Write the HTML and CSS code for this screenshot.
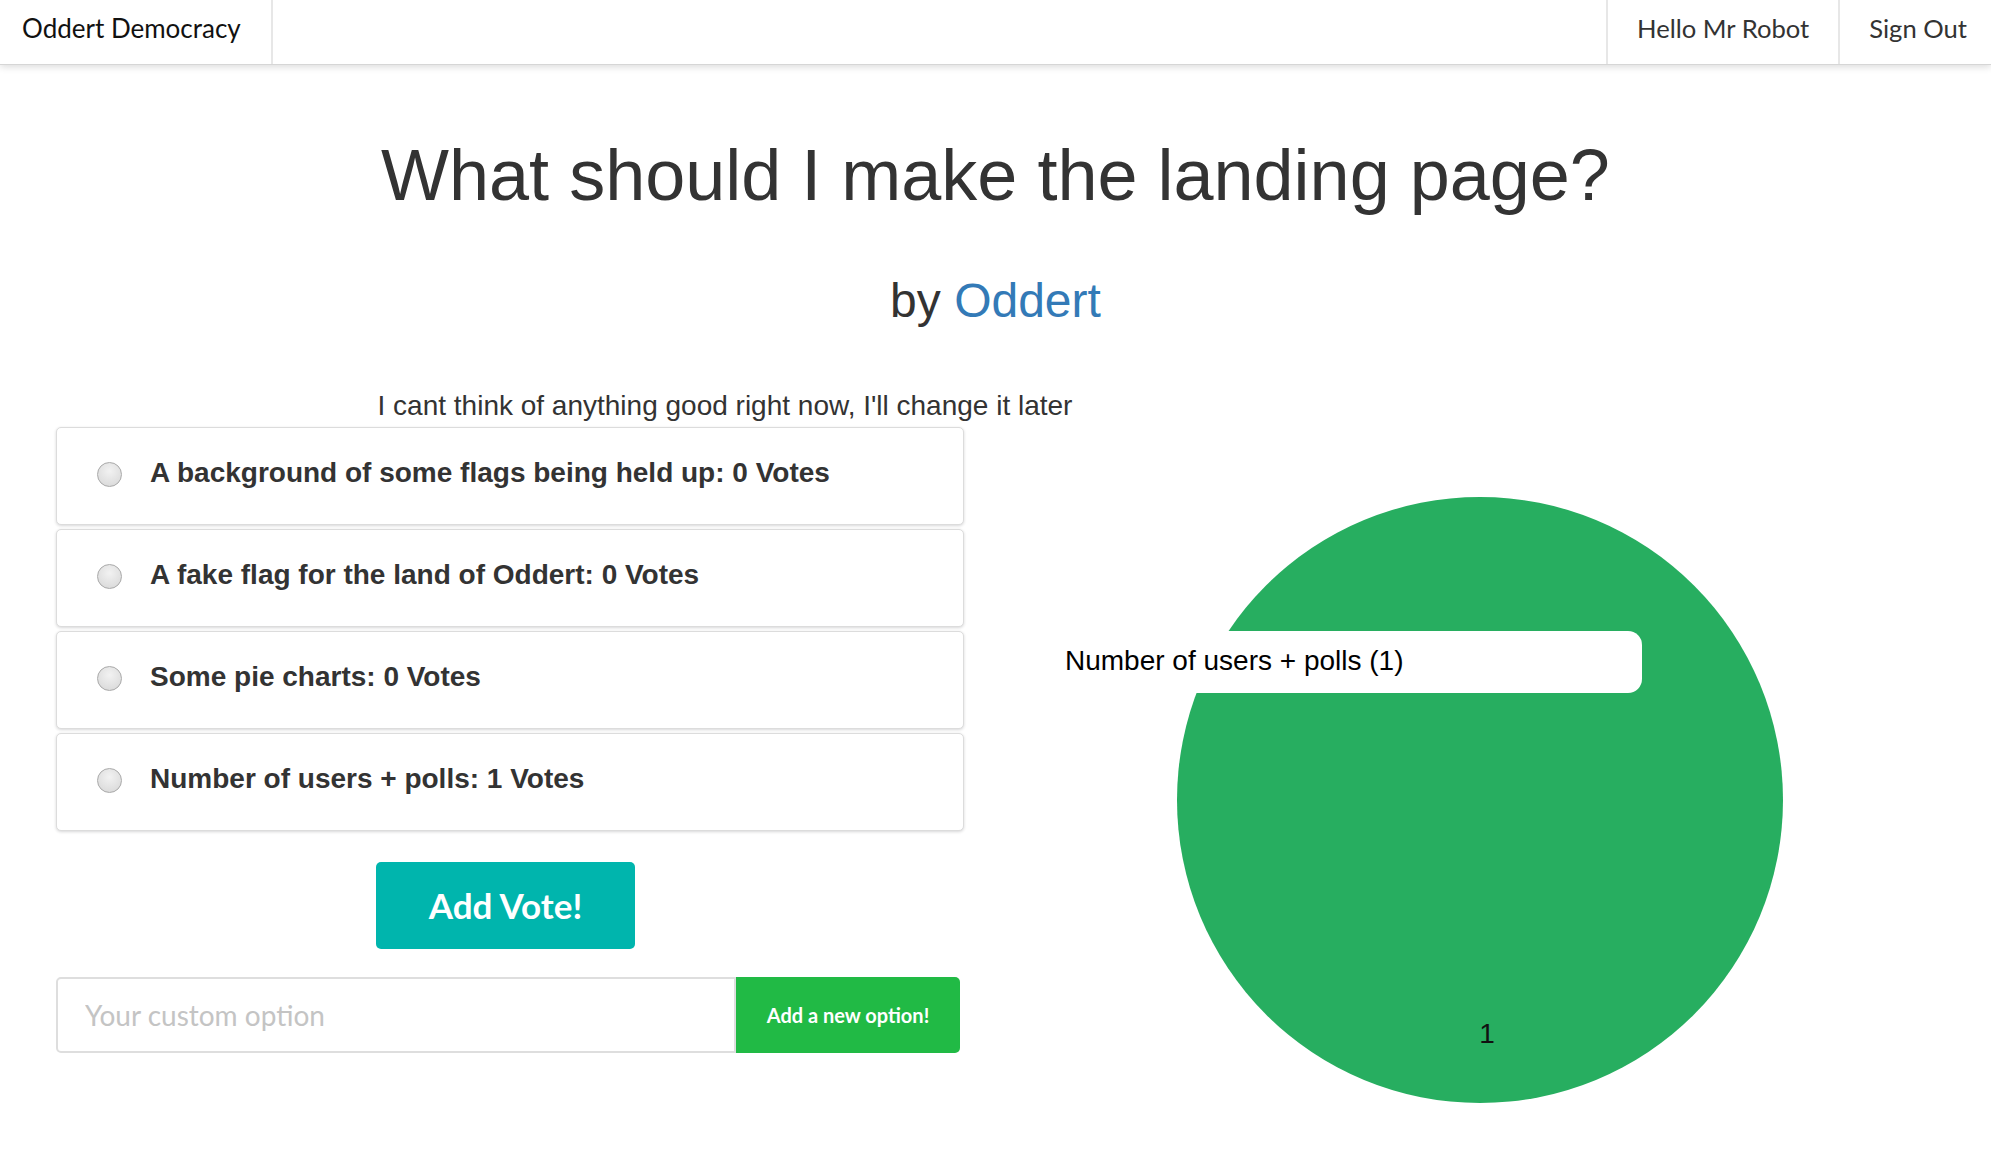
FILE: index.html
```html
<!DOCTYPE html>
<html lang="en">
<head>
<meta charset="utf-8">
<title>Oddert Democracy</title>
<link rel="stylesheet" href="styles.css">
</head>
<body>
<nav class="navbar">
  <a class="brand" href="#">Oddert Democracy</a>
  <div class="nav-right">
    <span class="nav-item">Hello Mr Robot</span>
    <a class="nav-item" href="#">Sign Out</a>
  </div>
</nav>
<main class="page">
  <h1 class="poll-title">What should I make the landing page?</h1>
  <h2 class="poll-author">by <a href="#">Oddert</a></h2>
  <p class="poll-desc">I cant think of anything good right now, I'll change it later</p>
  <div class="poll-body">
    <div class="poll-left">
      <label class="option-card"><input class="radio" type="radio" name="opt"><span class="option-text">A background of some flags being held up: 0 Votes</span></label>
      <label class="option-card"><input class="radio" type="radio" name="opt"><span class="option-text">A fake flag for the land of Oddert: 0 Votes</span></label>
      <label class="option-card"><input class="radio" type="radio" name="opt"><span class="option-text">Some pie charts: 0 Votes</span></label>
      <label class="option-card"><input class="radio" type="radio" name="opt"><span class="option-text">Number of users + polls: 1 Votes</span></label>
      <button class="vote-btn" type="button">Add Vote!</button>
      <div class="custom-row">
        <input class="custom-input" type="text" placeholder="Your custom option">
        <button class="add-btn" type="button">Add a new option!</button>
      </div>
    </div>
    <div class="poll-chart">
      <svg class="pie" width="606" height="606" viewBox="0 0 606 606">
        <circle cx="303" cy="303" r="303" fill="#27ae60"/>
        <text class="pie-label" x="310" y="546" text-anchor="middle">1</text>
      </svg>
      <div class="tooltip">Number of users + polls (1)</div>
    </div>
  </div>
</main>
</body>
</html>
```
FILE: styles.css
```css
body {
  margin: 0;
  font-family: "Liberation Sans", Arial, sans-serif;
  color: #333;
  background: #fff;
}

.navbar {
  display: flex;
  justify-content: space-between;
  height: 64px;
  border-bottom: 1px solid #d6d6d6;
  box-shadow: 0 2px 7px rgba(0, 0, 0, 0.14);
  font-family: Lato, "Open Sans", sans-serif;
  font-size: 26px;
}

.brand {
  display: flex;
  align-items: center;
  padding: 0 30px 8px 22px;
  border-right: 2px solid #e7e7e7;
  color: #111;
  text-decoration: none;
}

.nav-right {
  display: flex;
}

.nav-item {
  display: flex;
  align-items: center;
  padding: 0 29px 8px;
  border-left: 2px solid #e7e7e7;
  color: #333;
  font-size: 25.6px;
  text-decoration: none;
}

.nav-item:last-child {
  padding-right: 24px;
}

.poll-title {
  margin: 71px 0 0;
  font-size: 72px;
  font-weight: 400;
  line-height: 1.1;
  text-align: center;
}

.poll-author {
  margin: 60px 0 0;
  font-size: 48px;
  font-weight: 400;
  line-height: 1.1;
  text-align: center;
}

.poll-author a {
  color: #337ab7;
  text-decoration: none;
}

.poll-desc {
  margin: 63px 0 0;
  width: 1450px;
  font-size: 28px;
  line-height: 1.1;
  text-align: center;
}

.poll-body {
  display: flex;
  margin-top: 5px;
}

.poll-left {
  margin-left: 56px;
  width: 908px;
}

.option-card {
  display: flex;
  align-items: center;
  box-sizing: border-box;
  height: 98px;
  margin-bottom: 4px;
  padding: 0 0 5px 40px;
  border: 1px solid #dcdcdc;
  border-radius: 5px;
  box-shadow: 0 1px 3px rgba(34, 36, 38, 0.18);
  background: #fff;
}

.radio {
  appearance: none;
  -webkit-appearance: none;
  width: 25px;
  height: 25px;
  margin: 3px 28px 0 0;
  border: 1px solid #a9a9a9;
  border-radius: 50%;
  background: radial-gradient(circle at 50% 35%, #f2f2f2 0%, #dedede 70%, #d2d2d2 100%);
  flex-shrink: 0;
}

.option-text {
  font-size: 28px;
  font-weight: bold;
  color: #333;
}

.vote-btn {
  display: block;
  width: 259px;
  height: 87px;
  margin: 31px 0 0 320px;
  border: none;
  border-radius: 5px;
  background: #00b5ad;
  color: #fff;
  font-family: Lato, "Open Sans", sans-serif;
  font-weight: bold;
  font-size: 35px;
}

.custom-row {
  display: flex;
  height: 76px;
  margin-top: 28px;
  width: 904px;
}

.custom-input {
  box-sizing: border-box;
  width: 680px;
  height: 76px;
  padding: 0 27px;
  border: 2px solid #dedede;
  border-radius: 5px 0 0 5px;
  font-family: Lato, "Open Sans", sans-serif;
  font-size: 28px;
  color: #333;
  outline: none;
}

.custom-input::placeholder {
  color: #c4c4c4;
}

.add-btn {
  width: 224px;
  height: 76px;
  border: none;
  border-radius: 0 5px 5px 0;
  background: #21ba45;
  color: #fff;
  font-family: Lato, "Open Sans", sans-serif;
  font-weight: bold;
  font-size: 20px;
}

.poll-chart {
  position: relative;
  flex: 1;
  padding-left: 5px;
}

.pie {
  display: block;
  margin: 70px auto 0;
}

.pie-label {
  font-family: "Liberation Sans", Arial, sans-serif;
  font-size: 28px;
  fill: #111;
}

.tooltip {
  position: absolute;
  left: 86px;
  top: 204px;
  box-sizing: border-box;
  width: 592px;
  height: 62px;
  display: flex;
  align-items: center;
  padding: 0 0 2px 15px;
  border-radius: 14px;
  background: #fff;
  color: #000;
  font-size: 28px;
}
```
